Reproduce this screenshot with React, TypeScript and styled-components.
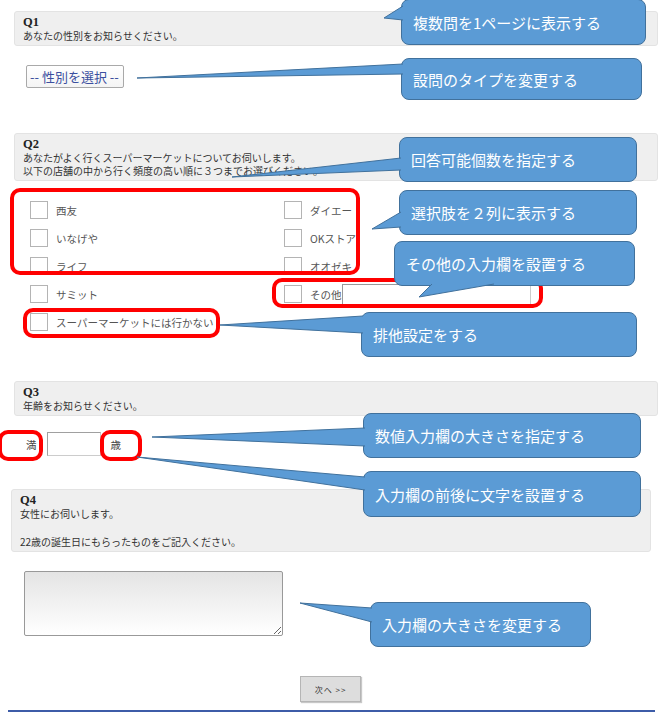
import styled, { createGlobalStyle } from "styled-components";

const GlobalStyle = createGlobalStyle`
  body {
    margin: 0;
    background: #fff;
    font-family: "Noto Sans CJK JP", "Noto Sans", sans-serif;
  }
`;

const calloutFill = "#5b9bd5";
const calloutEdge = "#41719c";

const Page = styled.div`
  position: relative;
  width: 668px;
  height: 716px;
  overflow: hidden;
`;

const Survey = styled.div`
  display: flex;
  flex-direction: column;
  padding-top: 11px;
`;

const QuestionHeader = styled.div<{ $top?: number; $left?: number; $right?: number }>`
  margin: ${({ $top }) => $top ?? 0}px ${({ $right }) => $right ?? 10}px 0
    ${({ $left }) => $left ?? 14}px;
  padding: 4px 8px 3px;
  background: #efefef;
  border: 1px solid #e3e3e3;
  border-radius: 3px;
  font-size: 10px;
  line-height: 13px;
  color: #333;
`;

const QLabel = styled.div`
  font-family: "Liberation Serif", serif;
  font-weight: bold;
  font-size: 12.5px;
  color: #222;
`;

const BlankLine = styled.div`
  height: 15px;
`;

const GenderSelect = styled.select`
  appearance: none;
  width: 98px;
  height: 23px;
  margin: 19px 0 0 26px;
  padding: 0 3px;
  box-sizing: border-box;
  border: 1px solid #a9a9a9;
  border-radius: 2px;
  background: linear-gradient(#fff, #f4f4f4);
  color: #3b4f9f;
  font-family: "Noto Sans CJK JP", sans-serif;
  font-size: 13px;
`;

const Options = styled.div`
  display: grid;
  grid-template-columns: 254px 1fr;
  grid-auto-rows: 28px;
  margin: 15px 0 0 30px;
`;

const Option = styled.label<{ $wide?: boolean }>`
  display: flex;
  align-items: center;
  gap: 8px;
  grid-column: ${({ $wide }) => ($wide ? "1 / -1" : "auto")};
  font-size: 10.5px;
  color: #555;
`;

const Check = styled.span`
  flex: none;
  width: 18px;
  height: 18px;
  box-sizing: border-box;
  border: 1px solid #b4b4b4;
  background: #fff;
`;

const OtherField = styled.span`
  display: inline-flex;
  align-items: center;
`;

const OtherInput = styled.input`
  width: 189px;
  height: 21px;
  box-sizing: border-box;
  border: 1px solid #ccc;
  border-top-color: #999;
  border-left-color: #999;
`;

const AgeRow = styled.div`
  display: flex;
  align-items: center;
  gap: 10px;
  margin: 16px 0 0 26px;
  font-size: 10.5px;
  color: #444;
`;

const AgeInput = styled.input`
  width: 54px;
  height: 24px;
  box-sizing: border-box;
  border: 1px solid #ccc;
  border-top-color: #a0a0a0;
  border-left-color: #a0a0a0;
`;

const Answer = styled.textarea`
  width: 259px;
  height: 65px;
  margin: 19px 0 0 24px;
  box-sizing: border-box;
  border: 1px solid #999;
  border-radius: 2px;
  background: linear-gradient(#e4e4e4, #fff);
`;

const Footer = styled.div`
  display: flex;
  justify-content: center;
  margin-top: 40px;
  padding-right: 7px;
`;

const NextButton = styled.button`
  width: 61px;
  height: 26px;
  background: #dddddd;
  border: 1px solid #b5b5b5;
  box-shadow: 1px 1px 1px #c8c8c8;
  font-family: "Noto Sans CJK JP", sans-serif;
  font-size: 8px;
  letter-spacing: 1px;
  color: #333;
`;

const BottomRule = styled.div`
  height: 2px;
  margin: 8px 13px 0 8px;
  background: #3d5ca8;
`;

const Highlight = styled.div<{ $x: number; $y: number; $w: number; $h: number }>`
  position: absolute;
  left: ${({ $x }) => $x}px;
  top: ${({ $y }) => $y}px;
  width: ${({ $w }) => $w}px;
  height: ${({ $h }) => $h}px;
  box-sizing: border-box;
  border: 4px solid #ff0000;
  border-radius: 10px;
`;

const Callout = styled.div<{ $x: number; $y: number; $w: number; $h: number }>`
  position: absolute;
  left: ${({ $x }) => $x}px;
  top: ${({ $y }) => $y}px;
  width: ${({ $w }) => $w}px;
  height: ${({ $h }) => $h}px;
  box-sizing: border-box;
  display: flex;
  align-items: center;
  padding-left: 11px;
  background: ${calloutFill};
  border: 1px solid ${calloutEdge};
  border-radius: 8px;
  color: #fff;
  font-size: 15px;
  white-space: nowrap;
`;

const Tails = styled.svg`
  position: absolute;
  left: 0;
  top: 0;
  pointer-events: none;
`;

type Pt = [number, number];

const callouts: {
  text: string;
  x: number;
  y: number;
  w: number;
  h: number;
  tail: [Pt, Pt, Pt];
}[] = [
  { text: "複数問を1ページに表示する", x: 401, y: -1, w: 245, h: 46, tail: [[384, 18], [403, 6], [403, 20]] },
  { text: "設問のタイプを変更する", x: 401, y: 58, w: 241, h: 42, tail: [[137, 78], [403, 64], [403, 74]] },
  { text: "回答可能個数を指定する", x: 399, y: 137, w: 238, h: 45, tail: [[232, 177], [401, 158], [401, 170]] },
  { text: "選択肢を２列に表示する", x: 399, y: 190, w: 238, h: 45, tail: [[372, 229], [401, 212], [401, 227]] },
  { text: "その他の入力欄を設置する", x: 394, y: 241, w: 241, h: 45, tail: [[419, 297], [432, 284], [494, 284]] },
  { text: "排他設定をする", x: 361, y: 312, w: 276, h: 45, tail: [[220, 325], [363, 316], [363, 333]] },
  { text: "数値入力欄の大きさを指定する", x: 363, y: 413, w: 278, h: 45, tail: [[152, 437], [365, 428], [365, 446]] },
  { text: "入力欄の前後に文字を設置する", x: 363, y: 471, w: 278, h: 46, tail: [[137, 457], [365, 477], [365, 490]] },
  { text: "入力欄の大きさを変更する", x: 370, y: 602, w: 221, h: 45, tail: [[300, 603], [372, 608], [372, 622]] },
];

const highlights = [
  { x: 10, y: 188, w: 350, h: 87 },
  { x: 272, y: 278, w: 271, h: 30 },
  { x: 23, y: 308, w: 197, h: 30 },
  { x: -2, y: 430, w: 45, h: 31 },
  { x: 100, y: 430, w: 42, h: 31 },
];

const stores: { label: string; other?: boolean; wide?: boolean }[] = [
  { label: "西友" },
  { label: "ダイエー" },
  { label: "いなげや" },
  { label: "OKストア" },
  { label: "ライフ" },
  { label: "オオゼキ" },
  { label: "サミット" },
  { label: "その他", other: true },
  { label: "スーパーマーケットには行かない", wide: true },
];

const pts = (p: Pt[]) => p.map(([x, y]) => `${x},${y}`).join(" ");

const App = () => {
  return (
    <Page>
      <GlobalStyle />
      <Survey>
        <QuestionHeader>
          <QLabel>Q1</QLabel>
          あなたの性別をお知らせください。
        </QuestionHeader>
        <GenderSelect defaultValue="">
          <option value="">-- 性別を選択 --</option>
        </GenderSelect>

        <QuestionHeader $top={45}>
          <QLabel>Q2</QLabel>
          あなたがよく行くスーパーマーケットについてお伺いします。
          <br />
          以下の店舗の中から行く頻度の高い順に３つまでお選びください。
        </QuestionHeader>
        <Options>
          {stores.map((s) => (
            <Option key={s.label} $wide={s.wide}>
              <Check />
              {s.other ? (
                <OtherField>
                  {s.label}
                  <OtherInput />
                </OtherField>
              ) : (
                s.label
              )}
            </Option>
          ))}
        </Options>

        <QuestionHeader $top={45}>
          <QLabel>Q3</QLabel>
          年齢をお知らせください。
        </QuestionHeader>
        <AgeRow>
          満<AgeInput />歳
        </AgeRow>

        <QuestionHeader $top={33} $left={11} $right={17}>
          <QLabel>Q4</QLabel>
          女性にお伺いします。
          <BlankLine />
          22歳の誕生日にもらったものをご記入ください。
        </QuestionHeader>
        <Answer />

        <Footer>
          <NextButton>次へ &gt;&gt;</NextButton>
        </Footer>
        <BottomRule />
      </Survey>

      {highlights.map((h, i) => (
        <Highlight key={i} $x={h.x} $y={h.y} $w={h.w} $h={h.h} />
      ))}

      {callouts.map((c) => (
        <Callout key={c.text} $x={c.x} $y={c.y} $w={c.w} $h={c.h}>
          {c.text}
        </Callout>
      ))}

      <Tails width={668} height={716}>
        {callouts.map((c) => {
          const [tip, a, b] = c.tail;
          return (
            <g key={c.text}>
              <polygon points={pts([a, tip, b])} fill={calloutFill} />
              <polyline points={pts([a, tip, b])} fill="none" stroke={calloutEdge} strokeWidth={1} />
            </g>
          );
        })}
      </Tails>
    </Page>
  );
};

export default App;
